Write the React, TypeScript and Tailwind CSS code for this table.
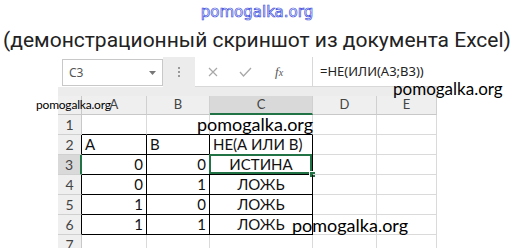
import React from 'react'

const cols = ['A', 'B', 'C', 'D', 'E']

type Cell = { text?: string; align?: 'left' | 'right' | 'center' }

const rows: Cell[][] = [
  [{}, {}, {}, {}, {}],
  [{ text: 'A', align: 'left' }, { text: 'B', align: 'left' }, { text: 'НЕ(А ИЛИ В)', align: 'left' }, {}, {}],
  [{ text: '0', align: 'right' }, { text: '0', align: 'right' }, { text: 'ИСТИНА', align: 'center' }, {}, {}],
  [{ text: '0', align: 'right' }, { text: '1', align: 'right' }, { text: 'ЛОЖЬ', align: 'center' }, {}, {}],
  [{ text: '1', align: 'right' }, { text: '0', align: 'right' }, { text: 'ЛОЖЬ', align: 'center' }, {}, {}],
  [{ text: '1', align: 'right' }, { text: '1', align: 'right' }, { text: 'ЛОЖЬ', align: 'center' }, {}, {}],
  [{}, {}, {}, {}, {}],
]

function cellClass(r: number, c: number) {
  // r: 1-based row, c: 0..4 (A..E)
  const inTable = r >= 2 && r <= 6 && c <= 2
  const right = inTable ? 'border-r-black' : 'border-r-[#dadada]'
  const bottom = (r === 1 && c <= 2) || inTable ? 'border-b-black' : 'border-b-[#dadada]'
  return `${right} ${bottom}`
}

const alignClass = {
  left: 'justify-start pl-[3px]',
  right: 'justify-end pr-[3px]',
  center: 'justify-center',
}

function Watermark({ className }: { className: string }) {
  return (
    <div className={`absolute font-['Lato',sans-serif] text-black leading-none whitespace-nowrap ${className}`}>
      pomogalka.org
    </div>
  )
}

export default function App() {
  return (
    <div className="relative w-[514px] h-[248px] overflow-hidden bg-white">
      {/* header texts */}
      <div className="h-[24px] flex justify-center items-center pt-[1px]">
        <span className="font-['DejaVu_Sans',sans-serif] text-[15px] text-white [-webkit-text-stroke:0.7px_#3a4bdc] leading-none">
          pomogalka.org
        </span>
      </div>
      <div className="h-[32px] text-center font-['Roboto',sans-serif] text-[21px] leading-[32px] text-[#222] whitespace-nowrap">
        (демонстрационный скриншот из документа Excel)
      </div>

      {/* excel */}
      <div className="ml-[58px] w-[379px] mt-[1px]">
        {/* formula bar */}
        <div className="h-[30px] flex items-stretch pl-[4px] bg-white">
          <div className="w-[101px] mt-[2px] h-[27px] border border-[#c8c8c8] bg-white flex items-center px-[6px] font-['Noto_Sans',sans-serif] text-[12px] text-[#555]">
            <span>C3</span>
            <span className="flex-1" />
            <svg width="7" height="4" viewBox="0 0 7 4">
              <path d="M0 0 L7 0 L3.5 4 Z" fill="#777" />
            </svg>
          </div>
          <div className="w-[32px] bg-[#ececec] flex flex-col items-center justify-center gap-[2px]">
            <span className="w-[2px] h-[2px] bg-[#999]" />
            <span className="w-[2px] h-[2px] bg-[#999]" />
            <span className="w-[2px] h-[2px] bg-[#999]" />
          </div>
          <div className="w-[117px] flex items-center border-b border-[#d8d8d8]">
            <svg width="10" height="10" viewBox="0 0 10 10" className="ml-[13px]">
              <path d="M1 1 L9 9 M9 1 L1 9" stroke="#a8a8a8" strokeWidth="1.2" />
            </svg>
            <svg width="13" height="10" viewBox="0 0 13 10" className="ml-[21px]">
              <path d="M1 5 L4.5 9 L12 1" stroke="#a8a8a8" strokeWidth="1.3" fill="none" />
            </svg>
            <span className="ml-[23px] font-['Liberation_Serif',serif] italic text-[13px] text-[#555]">
              f<span className="text-[10px]">x</span>
            </span>
          </div>
          <div className="flex-1 flex items-center border-l border-b border-[#d8d8d8] pl-[7px] font-['Noto_Sans',sans-serif] text-[13px] text-[#222] whitespace-nowrap">
            =НЕ(ИЛИ(A3;B3))
          </div>
        </div>
        <div className="h-[9px] bg-[#ececec]" />

        {/* grid */}
        <div className="grid grid-cols-[24px_65px_63px_103px_64px_60px] font-['Lato',sans-serif]">
          {/* column headers */}
          <div className="h-[19px] bg-[#efefef] border-r border-b border-[#c8c8c8]" />
          {cols.map((c) => (
            <div
              key={c}
              className={`h-[19px] flex items-center justify-center text-[13px] text-[#444] border-r border-[#d0d0d0] ${
                c === 'C' ? 'bg-[#d9d9d9] border-b-2 border-b-[#217346]' : 'bg-[#efefef] border-b border-b-[#c8c8c8]'
              }`}
            >
              {c}
            </div>
          ))}

          {rows.map((row, i) => {
            const r = i + 1
            return (
              <React.Fragment key={r}>
                <div
                  className={`h-[20px] flex items-center justify-center text-[14px] text-[#444] border-b border-b-[#d0d0d0] ${
                    r === 3
                      ? 'bg-[#d9d9d9] border-r-2 border-r-[#217346]'
                      : r >= 2 && r <= 6
                        ? 'bg-[#efefef] border-r border-r-black'
                        : 'bg-[#efefef] border-r border-r-[#c8c8c8]'
                  }`}
                >
                  {r}
                </div>
                {row.map((cell, c) => (
                  <div
                    key={c}
                    className={`relative h-[20px] flex items-center text-[15px] text-[#111] whitespace-nowrap border-r border-b ${cellClass(r, c)} ${
                      alignClass[cell.align ?? 'left']
                    }`}
                  >
                    {cell.text}
                    {r === 3 && c === 2 && (
                      <>
                        <div className="absolute -left-[1px] -top-[1px] right-0 bottom-0 border-2 border-[#217346]" />
                        <div className="absolute -right-[4px] -bottom-[4px] w-[7px] h-[7px] bg-[#217346] border border-white" />
                      </>
                    )}
                  </div>
                ))}
              </React.Fragment>
            )
          })}
        </div>
      </div>

      {/* watermarks */}
      <Watermark className="left-[393px] top-[80px] text-[17px]" />
      <Watermark className="left-[36px] top-[99px] text-[12px] tracking-[-0.2px]" />
      <Watermark className="left-[197px] top-[115px] text-[18px]" />
      <Watermark className="left-[292px] top-[216px] text-[18px]" />
    </div>
  )
}
